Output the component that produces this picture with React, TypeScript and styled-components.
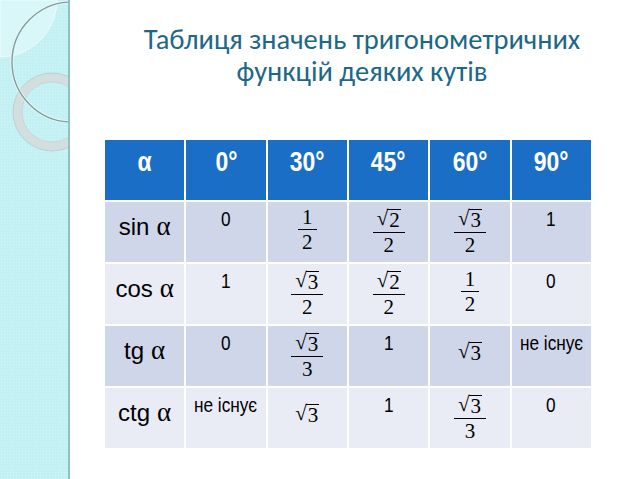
import React from 'react';
import styled, { createGlobalStyle } from 'styled-components';

type Val =
  | { kind: 'text'; text: string }
  | { kind: 'frac'; num: React.ReactNode; den: string }
  | { kind: 'root'; n: string };

const t = (text: string): Val => ({ kind: 'text', text });
const f = (num: React.ReactNode, den: string): Val => ({ kind: 'frac', num, den });
const r = (n: string): Val => ({ kind: 'root', n });

const Root = ({ n }: { n: string }) => (
  <RootWrap>
    <RootSign>√</RootSign>
    <Radicand>{n}</Radicand>
  </RootWrap>
);

const rows: { label: string; values: Val[] }[] = [
  { label: 'sin', values: [t('0'), f('1', '2'), f(<Root n="2" />, '2'), f(<Root n="3" />, '2'), t('1')] },
  { label: 'cos', values: [t('1'), f(<Root n="3" />, '2'), f(<Root n="2" />, '2'), f('1', '2'), t('0')] },
  { label: 'tg', values: [t('0'), f(<Root n="3" />, '3'), t('1'), r('3'), t('не існує')] },
  { label: 'ctg', values: [t('не існує'), r('3'), t('1'), f(<Root n="3" />, '3'), t('0')] },
];

const angles = ['0°', '30°', '45°', '60°', '90°'];

const App = () => {
  return (
    <>
      <GlobalStyle />
      <Slide>
        <Sidebar>
          <svg width="68" height="479" viewBox="0 0 68 479">
            <path d="M0 0 H57 A57 57 0 0 1 0 57 Z" fill="#d9f7f8" stroke="#eefcfc" strokeWidth="1" />
            <circle cx="52" cy="112" r="34.5" fill="none" stroke="#d3dede" strokeWidth="9" />
            <circle cx="52" cy="112" r="39" fill="none" stroke="#b9caca" strokeWidth="0.8" />
            <circle cx="52" cy="112" r="30" fill="none" stroke="#c3d2d2" strokeWidth="0.8" />
            <circle cx="72" cy="62" r="60" fill="none" stroke="#eaf8f8" strokeWidth="3" />
            <circle cx="72" cy="62" r="60" fill="none" stroke="#7f9c9e" strokeWidth="1.4" />
          </svg>
        </Sidebar>
        <Main>
          <Title>
            Таблиця значень тригонометричних
            <br />
            функцій деяких кутів
          </Title>
          <Table>
            <HeadCell>
              <Narrow>α</Narrow>
            </HeadCell>
            {angles.map((a) => (
              <HeadCell key={a}>
                <Narrow>{a}</Narrow>
              </HeadCell>
            ))}
            {rows.map((row, i) => (
              <React.Fragment key={row.label}>
                <LabelCell $shade={i % 2 === 0}>
                  {row.label}
                  <Alpha>α</Alpha>
                </LabelCell>
                {row.values.map((v, j) => (
                  <Cell key={j} $shade={i % 2 === 0} $center={v.kind === 'root'}>
                    {v.kind === 'text' && (
                      <Plain>
                        <Narrow>{v.text}</Narrow>
                      </Plain>
                    )}
                    {v.kind === 'root' && (
                      <Serif>
                        <Root n={v.n} />
                      </Serif>
                    )}
                    {v.kind === 'frac' && (
                      <Frac>
                        <span>{v.num}</span>
                        <Bar />
                        <span>{v.den}</span>
                      </Frac>
                    )}
                  </Cell>
                ))}
              </React.Fragment>
            ))}
          </Table>
        </Main>
      </Slide>
    </>
  );
};

const GlobalStyle = createGlobalStyle`
  html, body {
    margin: 0;
    padding: 0;
    background: #fff;
  }
`;

const Slide = styled.div`
  display: flex;
  width: 638px;
  height: 479px;
  overflow: hidden;
  background: #fff;
`;

const Sidebar = styled.div`
  width: 68px;
  height: 479px;
  flex-shrink: 0;
  background-color: #c3f1f3;
  background-image: radial-gradient(#d3f7f8 0.8px, transparent 0.9px);
  background-size: 3px 3px;
  border-right: 2px solid #94bfc2;

  svg {
    display: block;
  }
`;

const Main = styled.div`
  flex: 1;
  display: flex;
  flex-direction: column;
`;

const Title = styled.h1`
  margin: 24px 0 0 16px;
  font-family: Carlito, Lato, 'Open Sans', sans-serif;
  font-weight: 400;
  font-size: 28.5px;
  line-height: 32px;
  color: #1d6787;
  text-align: center;
`;

const Table = styled.div`
  display: grid;
  grid-template-columns: repeat(6, 1fr);
  grid-template-rows: repeat(5, 60px);
  gap: 2px;
  width: 486px;
  margin: 52px 0 0 35px;
  background: #fff;
`;

const Narrow = styled.span`
  display: inline-block;
  white-space: nowrap;
  transform: scaleX(0.82);
`;

const HeadCell = styled.div`
  display: flex;
  justify-content: center;
  padding-top: 7px;
  background: #1b6ec6;
  color: #fff;
  font-family: 'Liberation Sans', Arial, sans-serif;
  font-weight: 700;
  font-size: 28px;
  line-height: 30px;
`;

const LabelCell = styled.div<{ $shade: boolean }>`
  display: flex;
  justify-content: center;
  align-items: baseline;
  padding-top: 11px;
  background: ${(p) => (p.$shade ? '#cfd6ea' : '#e9ecf5')};
  color: #000;
  font-family: 'Liberation Sans', Arial, sans-serif;
  font-size: 24px;
  line-height: 26px;
`;

const Alpha = styled.span`
  margin-left: 7px;
  font-family: 'Liberation Serif', 'Times New Roman', serif;
  font-size: 27px;
`;

const Cell = styled.div<{ $shade: boolean; $center: boolean }>`
  display: flex;
  flex-direction: column;
  align-items: center;
  justify-content: ${(p) => (p.$center ? 'center' : 'flex-start')};
  padding: ${(p) => (p.$center ? '0 0 9px' : '3px 0 0')};
  background: ${(p) => (p.$shade ? '#cfd6ea' : '#e9ecf5')};
  color: #000;
`;

const Plain = styled.span`
  margin-top: 2px;
  font-family: 'Liberation Sans', Arial, sans-serif;
  font-size: 21px;
  line-height: 24px;
`;

const Serif = styled.span`
  font-family: 'Liberation Serif', 'Times New Roman', serif;
  font-size: 21px;
  line-height: 22px;
`;

const Frac = styled.span`
  display: inline-flex;
  flex-direction: column;
  align-items: center;
  margin-top: 2px;
  font-family: 'Liberation Serif', 'Times New Roman', serif;
  font-size: 21px;
  line-height: 20px;
`;

const Bar = styled.span`
  align-self: stretch;
  height: 1px;
  margin: 2px -4px 2px;
  background: #000;
`;

const RootWrap = styled.span`
  display: inline-flex;
  align-items: flex-start;
`;

const RootSign = styled.span`
  line-height: 22px;
`;

const Radicand = styled.span`
  border-top: 1px solid #000;
  margin: 2px 0 0 -1px;
  line-height: 20px;
  padding: 0 1px 0 2px;
`;

export default App;
